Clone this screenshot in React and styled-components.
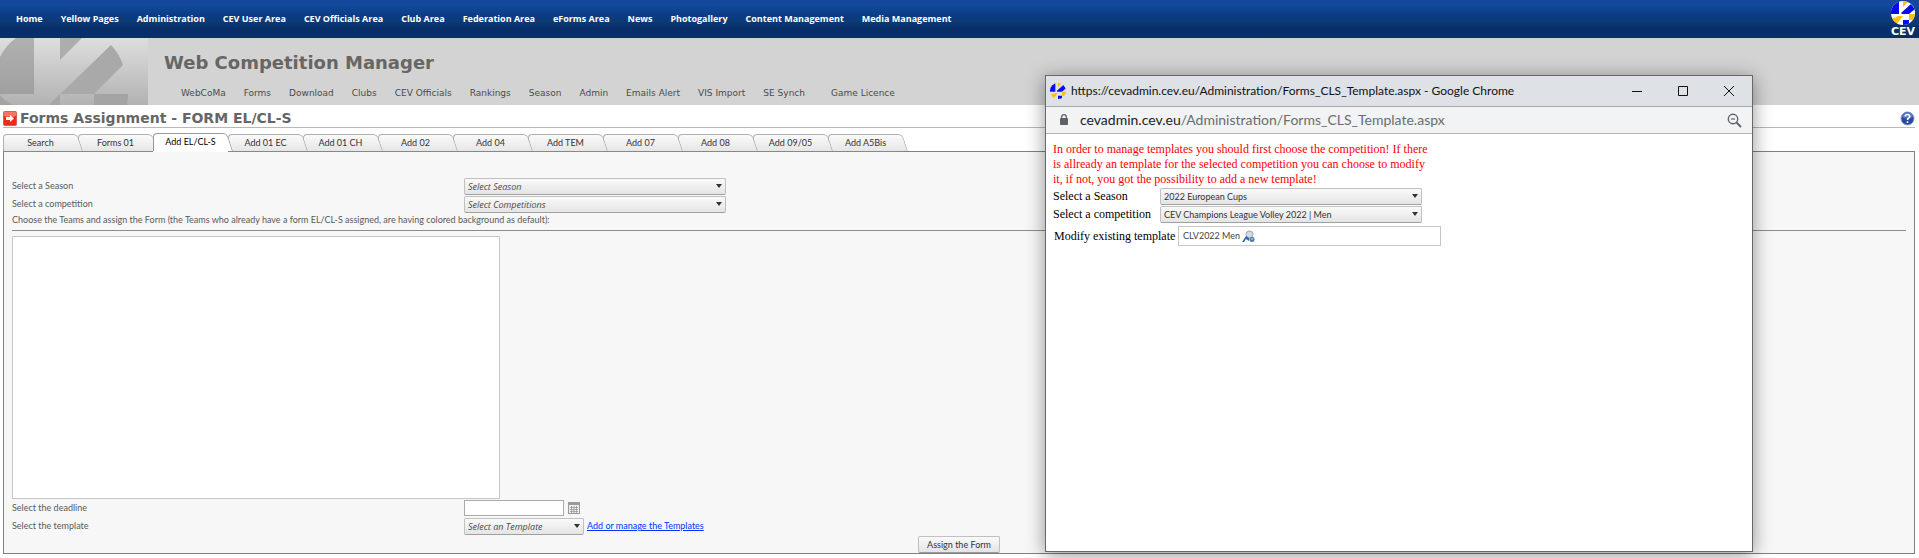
import React from 'react';
import styled, { createGlobalStyle, css } from 'styled-components';

const ui = '"Lato", "Segoe UI", sans-serif';
const humanist = '"Open Sans", "Segoe UI", sans-serif';
const wide = '"DejaVu Sans", Verdana, sans-serif';
const serif = '"Liberation Serif", "Times New Roman", serif';

const Global = createGlobalStyle`
  *, *::before, *::after { box-sizing: border-box; }
  body { margin: 0; background: #fff; color: #595959; font: 9px/14px ${ui}; }
`;

const Page = styled.div`
  position: relative;
  overflow-x: clip;
`;

const TopBar = styled.header`
  display: flex;
  justify-content: space-between;
  align-items: center;
  height: 38px;
  padding: 0 4px 0 16px;
  background: linear-gradient(#17479e 0, #10499a 6px, #0c3c86 15px, #0c3a73 22px, #082f6b 28px, #08305f 100%);
`;

const Menu = styled.nav`
  display: flex;
  gap: 18px;
`;

const TopLink = styled.a`
  color: #fff;
  font: 700 9px/14px ${humanist};
  text-decoration: none;
  white-space: nowrap;
`;

const Brand = styled.a`
  display: flex;
  flex-direction: column;
  align-items: center;
  gap: 1px;
  width: 24px;
  color: #fff;
  font: 700 11px/11px ${wide};
  text-decoration: none;
`;

const Banner = styled.section`
  display: flex;
  height: 67px;
  background: #d3d3d3;
`;

const BannerText = styled.div`
  display: flex;
  flex-direction: column;
  justify-content: space-between;
  padding: 13px 0 5px 16px;
`;

const SiteTitle = styled.h1`
  margin: 0;
  color: #666;
  font: bold 18px/24px ${wide};
`;

const SubMenu = styled(Menu)`
  padding-left: 17px;
`;

const SubLink = styled.a`
  color: #4c4c4c;
  font: 9px/14px ${wide};
  text-decoration: none;
  white-space: nowrap;
  &:last-child { margin-left: 8px; }
`;

const Main = styled.main`
  padding: 0 4px 4px 3px;
`;

const TitleRow = styled.div`
  display: flex;
  align-items: center;
  gap: 3px;
  height: 23px;
  padding-top: 4px;
  border-bottom: 1px solid #b8b8b8;
`;

const PageTitle = styled.h2`
  flex: 1;
  margin: 0;
  color: #666;
  font: bold 14px/18px ${wide};
`;

const IconButton = styled.button`
  display: inline-flex;
  padding: 0;
  border: 0;
  background: none;
`;

const Tabs = styled.div`
  display: flex;
  align-items: flex-end;
  height: 24px;
  padding-top: 5px;
  margin-bottom: -1px;
`;

const Tab = styled.button`
  position: relative;
  isolation: isolate;
  flex: 0 0 75px;
  height: 18px;
  padding: 0;
  border: 0;
  border-bottom: 1px solid #888;
  background: none;
  color: #333;
  font: 9px/16px ${ui};
  z-index: ${(p) => 20 - p.$order};

  &::before, &::after {
    content: '';
    position: absolute;
    z-index: -1;
    top: 0;
    bottom: 0;
    border: 1px solid #b0b0b0;
    border-bottom: 0;
    background: linear-gradient(#fafafa, #e6e6e6);
  }
  &::before {
    left: 0;
    width: 45px;
    border-right: 0;
    border-radius: 4px 0 0 0;
  }
  &::after {
    left: 40px;
    right: -5px;
    border-left: 0;
    border-radius: 0 5px 0 0;
    transform: skewX(18deg);
    transform-origin: bottom;
  }

  ${(p) => p.$active && css`
    height: 19px;
    color: #000;
    border-bottom-color: #fff;
    z-index: 30;
    &::before, &::after { background: #fff; border-color: #999; }
  `}
`;

const Panel = styled.form`
  padding: 25px 8px 0;
  border: 1px solid #808080;
  background: #f7f7f7;
`;

const Row = styled.div`
  display: grid;
  grid-template-columns: 452px 1fr;
  align-items: center;
  height: 18px;
`;

const Controls = styled.div`
  display: flex;
  align-items: center;
  gap: ${(p) => p.$gap}px;
`;

const Hint = styled.label`
  display: block;
  padding-bottom: 3px;
  line-height: 14px;
`;

const Rule = styled.hr`
  height: 1px;
  margin: 0 0 5px;
  border: 0;
  background: #8c8c8c;
`;

const Teams = styled.select`
  display: block;
  width: 488px;
  height: 263px;
  padding: 0;
  border: 1px solid #c6c6c6;
  border-radius: 0;
  background: #fff;
`;

const ComboWrap = styled.span`
  position: relative;
  display: block;
  width: ${(p) => p.$width}px;
  height: 17px;

  &::after {
    content: '';
    position: absolute;
    right: 4px;
    top: 6px;
    border: 3px solid transparent;
    border-top: 4px solid #333;
    border-bottom: 0;
    pointer-events: none;
  }
`;

const Combo = styled.select`
  appearance: none;
  display: block;
  width: 100%;
  height: 17px;
  padding: 2px 14px 0 3px;
  border: 1px solid #c0c0c0;
  border-bottom-color: #a0a0a0;
  border-radius: 2px;
  background: linear-gradient(#fafafa, #e4e4e4);
  color: ${(p) => (p.$empty ? '#4c4c4c' : '#333')};
  font: ${(p) => (p.$empty ? `italic 9px/12px ${humanist}` : `9px/12px ${ui}`)};
`;

const DateInput = styled.input`
  width: 100px;
  height: 16px;
  padding: 0 3px;
  border: 1px solid #aaa;
  background: #fff;
  font: 9px/12px ${ui};
`;

const TextLink = styled.a`
  color: #03f;
  text-decoration: underline;
`;

const Actions = styled.div`
  display: flex;
  justify-content: center;
  padding-top: 1px;
`;

const Submit = styled.button`
  width: 82px;
  height: 17px;
  padding: 0;
  border: 1px solid #c0c0c0;
  border-bottom-color: #999;
  border-radius: 2px;
  background: linear-gradient(#fafafa, #e4e4e4);
  color: #333;
  font: 9px/14px ${ui};
`;

const Popup = styled.section`
  position: absolute;
  z-index: 50;
  top: 75px;
  right: 166px;
  width: 708px;
  border: 1px solid #686868;
  background: #fff;
  box-shadow: 0 3px 18px rgba(0, 0, 0, 0.42);
`;

const PopupTitleBar = styled.div`
  display: flex;
  align-items: center;
  gap: 5px;
  height: 31px;
  padding: 0 17px 0 4px;
  border-bottom: 1px solid #a9abae;
  background: #dee1e6;
  color: #111;
  font: 12px/16px ${ui};
`;

const PopupTitle = styled.span`
  flex: 1;
`;

const WindowButtons = styled.div`
  display: flex;
  gap: 34px;
`;

const AddressBar = styled.div`
  display: flex;
  align-items: center;
  gap: 11px;
  height: 27px;
  padding: 0 10px 0 13px;
  border-bottom: 1px solid #b4b5b8;
  background: #f1f3f4;
  color: #6a6d70;
  font: 14px/18px ${ui};
`;

const Address = styled.span`
  flex: 1;
`;

const Host = styled.span`
  color: #222;
`;

const PopupBody = styled.form`
  min-height: 417px;
  padding: 8px 7px;
  color: #000;
  font: 12px/15px ${serif};
`;

const Notice = styled.p`
  width: 384px;
  margin: 0;
  color: #f00;
`;

const PopupRow = styled.div`
  display: grid;
  grid-template-columns: 107px 1fr;
  align-items: center;
  height: 18px;
`;

const TemplateRow = styled.div`
  display: flex;
  align-items: center;
  gap: 2px;
  padding: 3px 0 0 1px;
`;

const TemplateLabel = styled.span`
  width: 122px;
`;

const TemplateBox = styled.div`
  display: flex;
  align-items: center;
  gap: 2px;
  width: 263px;
  height: 20px;
  padding-left: 4px;
  border: 1px solid #c6c6c6;
  color: #444;
  font: 9px/14px ${ui};
`;

const Emblem = ({ size, pale }) => (
  <svg width={size} height={size} viewBox="0 0 24 24" aria-hidden="true">
    <clipPath id={`ball${size}`}><circle cx="12" cy="12" r="12" /></clipPath>
    <g clipPath={`url(#ball${size})`}>
      {!pale && <rect width="24" height="24" fill="#fff" />}
      <path d="M0 0H8V13H0Z" fill="#0a0af0" />
      <path d="M12 0H18L12 6Z" fill="#fdc010" />
      <path d="M20 3L24 8L18 13H11L10 12Z" fill="#0a0af0" />
      <path d="M0 16C3 18 5 16 7 15L12 15L5 24H0Z" fill="#fdc010" />
      <path d="M12 19H18V24H12Z" fill="#0a0af0" />
      <path d="M18 13H24V19H18Z" fill="#fdc010" />
    </g>
  </svg>
);

const BannerArt = () => (
  <svg width="148" height="67" viewBox="0 0 148 67" aria-hidden="true">
    <defs>
      <linearGradient id="sheen" x1="0" y1="0" x2="0" y2="1">
        <stop offset="0" stopColor="#dedede" />
        <stop offset="1" stopColor="#b2b2b2" />
      </linearGradient>
      <linearGradient id="shade" x1="0" y1="0" x2="0" y2="1">
        <stop offset="0" stopColor="#b0b0b0" />
        <stop offset="1" stopColor="#a0a0a0" />
      </linearGradient>
    </defs>
    <rect width="148" height="67" fill="url(#sheen)" />
    <path d="M16 0H34V56H0V19Q6 7 16 0Z" fill="url(#shade)" />
    <path d="M60 0H82L60 22Z" fill="#adadad" />
    <path d="M111 7Q119 15 123 27L94 56H60L49 67Z" fill="#a9a9a9" />
    <path d="M49 67L60 56V67Z" fill="#a6a6a6" />
    <path d="M94 56H128Q128 62 127 67H94Z" fill="#a4a4a4" />
    <path d="M0 57Q5 63 13 67H0Z" fill="#a4a4a4" />
  </svg>
);

const ArrowIcon = () => (
  <svg width="14" height="15" viewBox="0 0 14 15" aria-hidden="true">
    <rect x="0.5" y="0.5" width="13" height="14" rx="1" fill="#f32b16" stroke="#c9665c" />
    <path d="M1 1H13V5Q7 7 1 5Z" fill="#ff7565" />
    <path d="M3 6H7V4L11 7.500L7 11V9H3Z" fill="#fff" />
  </svg>
);

const HelpIcon = () => (
  <svg width="15" height="15" viewBox="0 0 15 15" aria-hidden="true">
    <circle cx="7.500" cy="7.500" r="6.500" fill="#2548a0" stroke="#8c99bd" />
    <path d="M2 6A5.500 5 0 0 1 13 6Q7.500 9 2 6Z" fill="#5777c4" />
    <path d="M5.300 5.500Q5.300 3.500 7.500 3.500T9.700 5.500Q9.700 6.500 8.500 7.200Q7.500 7.800 7.500 9M7.500 10.300V12" fill="none" stroke="#fff" strokeWidth="1.600" />
  </svg>
);

const CalendarIcon = () => (
  <svg width="12" height="12" viewBox="0 0 12 12" aria-hidden="true">
    <rect x="0.500" y="0.500" width="11" height="11" fill="#eee" stroke="#999" />
    <path d="M0 0H12V3H0Z" fill="#999" />
    <path d="M2 5.500H10M2 7.500H10M2 9.500H10M3.500 4V11M6 4V11M8.500 4V11" stroke="#999" strokeWidth="0.800" />
  </svg>
);

const LockIcon = () => (
  <svg width="10" height="12" viewBox="0 0 10 12" aria-hidden="true">
    <rect x="1" y="4" width="8" height="7" rx="1" fill="#5f6368" />
    <path d="M2.700 5V3A2.300 2.300 0 0 1 7.300 3V5" fill="none" stroke="#5f6368" strokeWidth="1.300" />
  </svg>
);

const ZoomOutIcon = () => (
  <svg width="15" height="15" viewBox="0 0 15 15" fill="none" stroke="#5f6368" aria-hidden="true">
    <circle cx="6" cy="6" r="4.700" strokeWidth="1.400" />
    <path d="M4 6H8" strokeWidth="1.200" />
    <path d="M9.500 9.500L14 14" strokeWidth="1.800" />
  </svg>
);

const WindowIcon = ({ d }) => (
  <svg width="12" height="12" viewBox="0 0 12 12" fill="none" stroke="#111" aria-hidden="true">
    <path d={d} />
  </svg>
);

const PreviewIcon = () => (
  <svg width="13" height="13" viewBox="0 0 13 13" aria-hidden="true">
    <path d="M4 2Q7 -1 11 2V9H4Z" fill="#d9dde2" />
    <circle cx="7.500" cy="4.500" r="3.500" fill="#d5dbe2" stroke="#a3a9b0" />
    <path d="M0 12L4 6L7 8V11L4 9L2 12Z" fill="#3567a5" />
    <circle cx="10" cy="9.500" r="2.500" fill="#4b79b2" />
    <circle cx="10" cy="9" r="1" fill="#a9c4e2" />
  </svg>
);

const Select = ({ id, label, width, empty }) => (
  <ComboWrap $width={width}>
    <Combo id={id} $empty={empty}><option>{label}</option></Combo>
  </ComboWrap>
);

const topLinks = ['Home', 'Yellow Pages', 'Administration', 'CEV User Area', 'CEV Officials Area', 'Club Area', 'Federation Area', 'eForms Area', 'News', 'Photogallery', 'Content Management', 'Media Management'];
const subLinks = ['WebCoMa', 'Forms', 'Download', 'Clubs', 'CEV Officials', 'Rankings', 'Season', 'Admin', 'Emails Alert', 'VIS Import', 'SE Synch', 'Game Licence'];
const tabs = ['Search', 'Forms 01', 'Add EL/CL-S', 'Add 01 EC', 'Add 01 CH', 'Add 02', 'Add 04', 'Add TEM', 'Add 07', 'Add 08', 'Add 09/05', 'Add A5Bis'];

export default function App() {
  return (
    <Page>
      <Global />
      <TopBar>
        <Menu>
          {topLinks.map((t) => <TopLink key={t} href="#">{t}</TopLink>)}
        </Menu>
        <Brand href="#"><Emblem size={24} />CEV</Brand>
      </TopBar>
      <Banner>
        <BannerArt />
        <BannerText>
          <SiteTitle>Web Competition Manager</SiteTitle>
          <SubMenu>
            {subLinks.map((t) => <SubLink key={t} href="#">{t}</SubLink>)}
          </SubMenu>
        </BannerText>
      </Banner>
      <Main>
        <TitleRow>
          <ArrowIcon />
          <PageTitle>Forms Assignment - FORM EL/CL-S</PageTitle>
          <IconButton type="button" aria-label="Help"><HelpIcon /></IconButton>
        </TitleRow>
        <Tabs role="tablist">
          {tabs.map((t, i) => (
            <Tab key={t} type="button" role="tab" aria-selected={i === 2} $order={i} $active={i === 2}>{t}</Tab>
          ))}
        </Tabs>
        <Panel>
          <Row>
            <label htmlFor="season">Select a Season</label>
            <Select id="season" label="Select Season" width={262} empty />
          </Row>
          <Row>
            <label htmlFor="competition">Select a competition</label>
            <Select id="competition" label="Select Competitions" width={262} empty />
          </Row>
          <Hint htmlFor="teams">Choose the Teams and assign the Form (the Teams who already have a form EL/CL-S assigned, are having colored background as default):</Hint>
          <Rule />
          <Teams id="teams" multiple />
          <Row>
            <label htmlFor="deadline">Select the deadline</label>
            <Controls $gap={4}>
              <DateInput id="deadline" type="text" />
              <IconButton type="button" aria-label="Open the calendar"><CalendarIcon /></IconButton>
            </Controls>
          </Row>
          <Row>
            <label htmlFor="template">Select the template</label>
            <Controls $gap={3}>
              <Select id="template" label="Select an Template" width={120} empty />
              <TextLink href="#">Add or manage the Templates</TextLink>
            </Controls>
          </Row>
          <Actions><Submit type="button">Assign the Form</Submit></Actions>
        </Panel>
      </Main>
      <Popup>
        <PopupTitleBar>
          <Emblem size={16} pale />
          <PopupTitle>https://cevadmin.cev.eu/Administration/Forms_CLS_Template.aspx - Google Chrome</PopupTitle>
          <WindowButtons>
            <IconButton type="button" aria-label="Minimize"><WindowIcon d="M1 6.500H11" /></IconButton>
            <IconButton type="button" aria-label="Maximize"><WindowIcon d="M1.500 1.500H10.500V10.500H1.500Z" /></IconButton>
            <IconButton type="button" aria-label="Close"><WindowIcon d="M1 1L11 11M11 1L1 11" /></IconButton>
          </WindowButtons>
        </PopupTitleBar>
        <AddressBar>
          <LockIcon />
          <Address><Host>cevadmin.cev.eu</Host>/Administration/Forms_CLS_Template.aspx</Address>
          <IconButton type="button" aria-label="Zoom out"><ZoomOutIcon /></IconButton>
        </AddressBar>
        <PopupBody>
          <Notice>In order to manage templates you should first choose the competition! If there is allready an template for the selected competition you can choose to modify it, if not, you got the possibility to add a new template!</Notice>
          <PopupRow>
            <label htmlFor="popup-season">Select a Season</label>
            <Select id="popup-season" label="2022 European Cups" width={262} />
          </PopupRow>
          <PopupRow>
            <label htmlFor="popup-competition">Select a competition</label>
            <Select id="popup-competition" label="CEV Champions League Volley 2022 | Men" width={262} />
          </PopupRow>
          <TemplateRow>
            <TemplateLabel>Modify existing template</TemplateLabel>
            <TemplateBox>
              CLV2022 Men
              <IconButton type="button" aria-label="Preview the template"><PreviewIcon /></IconButton>
            </TemplateBox>
          </TemplateRow>
        </PopupBody>
      </Popup>
    </Page>
  );
}
